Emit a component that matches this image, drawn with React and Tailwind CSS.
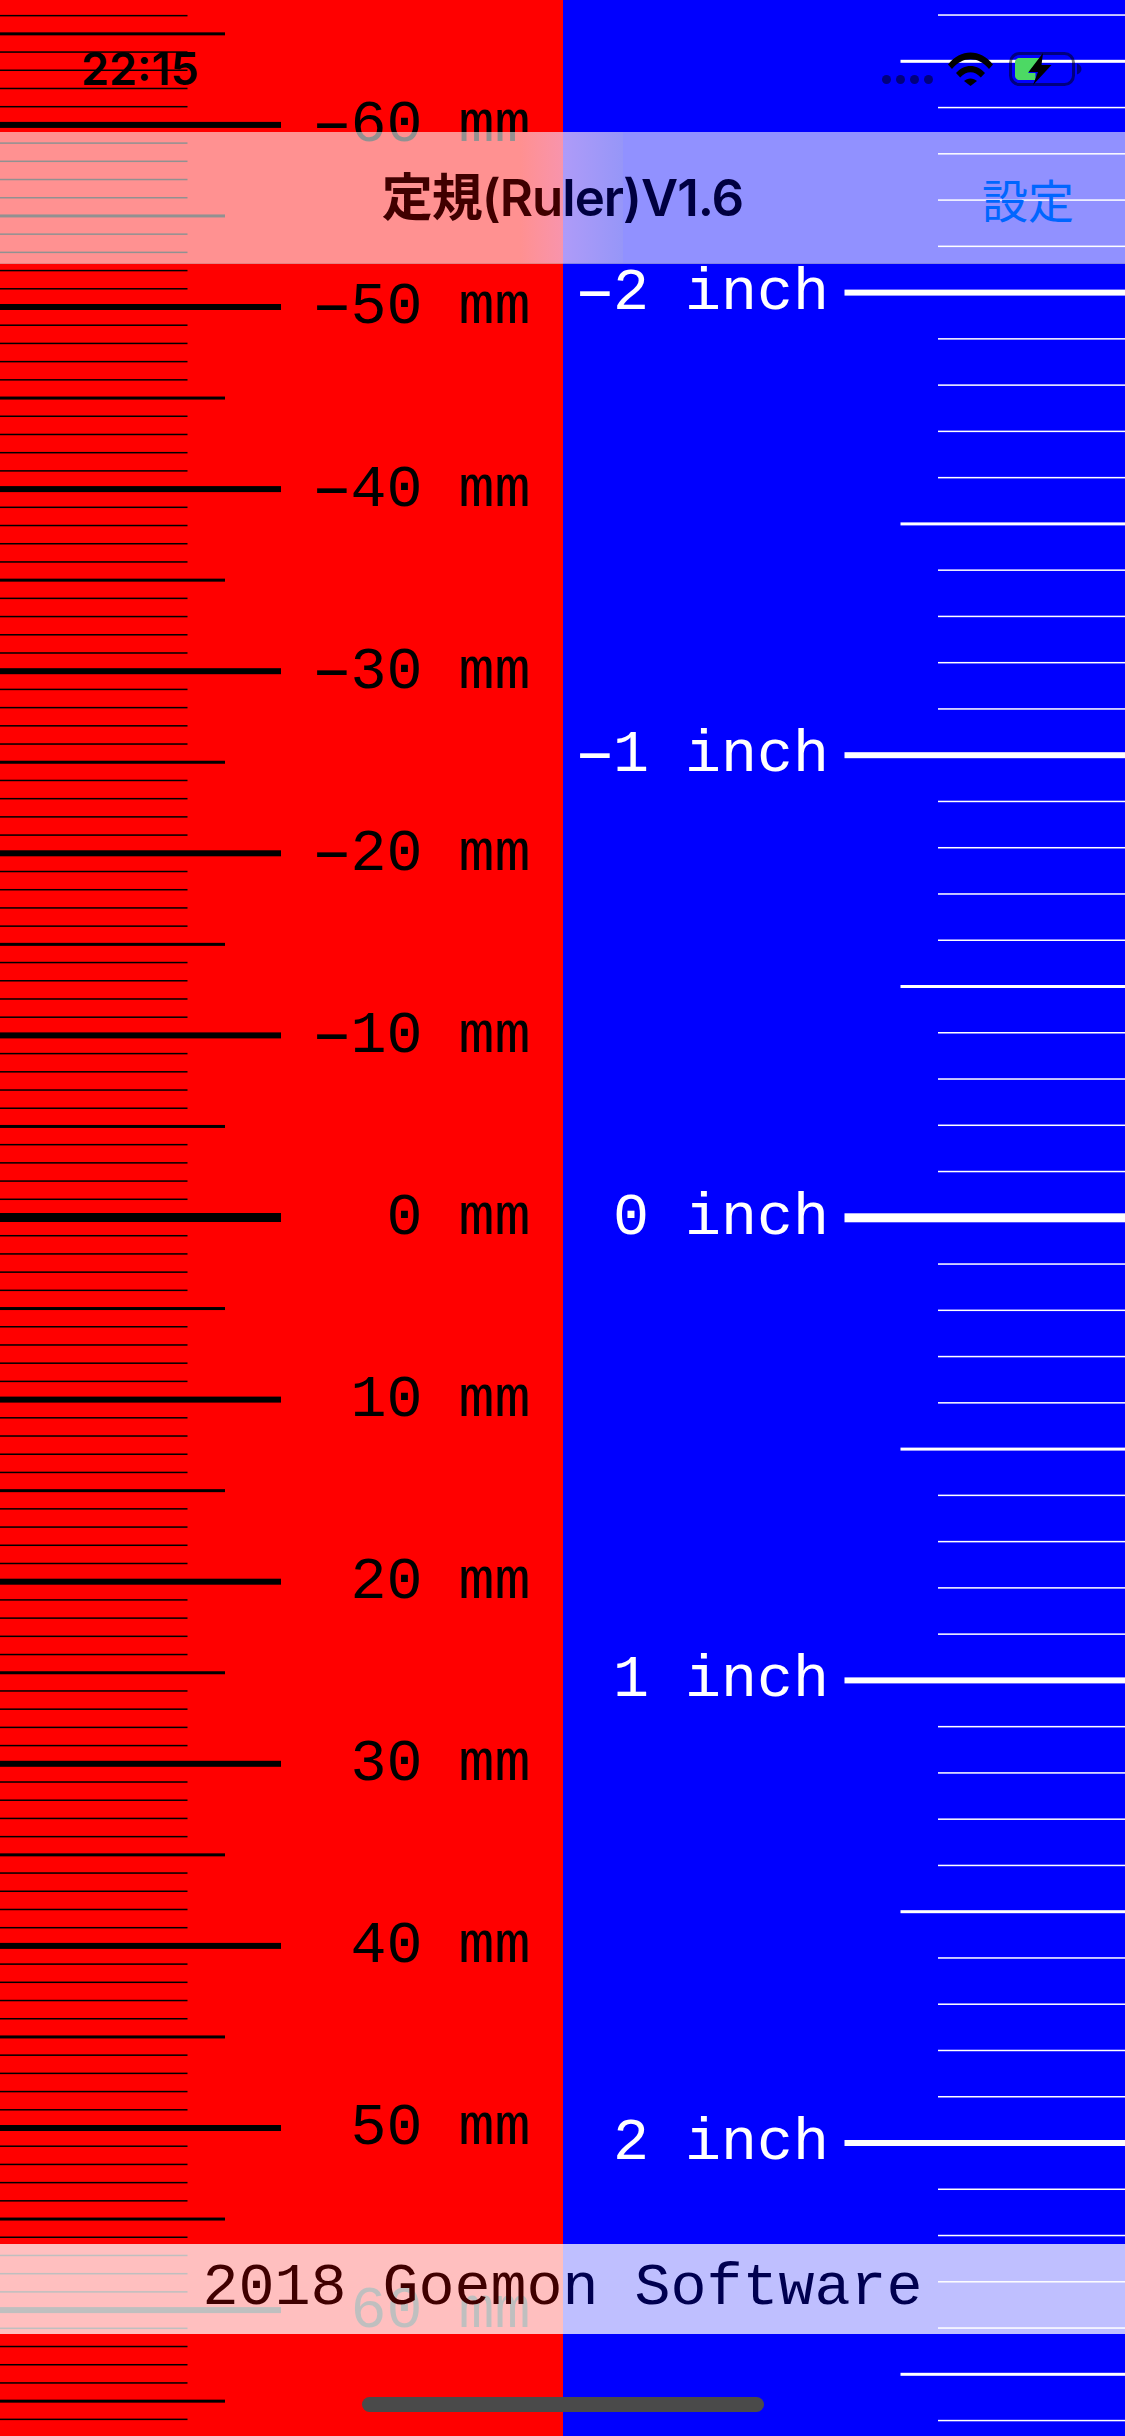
const MM_ZERO = 1217.5;
const MM_STEP = 18.21;
const INCH_ZERO = 1217.8;
const INCH_STEP = 46.26;

const range = (from, to) => Array.from({ length: to - from + 1 }, (_, i) => from + i);

const toTick = (k, y) => {
  if (k === 0) return { k, y, w: 281, h: 9 };
  if (k % 10 === 0) return { k, y, w: 281, h: 6 };
  if (k % 5 === 0) return { k, y, w: 225, h: 3 };
  return { k, y, w: 187.5, h: 1.5 };
};

const mmTicks = range(-66, 67).map((k) => toTick(k, MM_ZERO + k * MM_STEP));
const inchTicks = range(-26, 26).map((k) => toTick(k, INCH_ZERO + k * INCH_STEP));

const mmLabels = range(-6, 6).map((n) => n * 10);
const inchLabels = range(-2, 2);

// the tick marks of one ruler, drawn so they keep their fractional positions
const Scale = ({ ticks, side, color }) => (
  <svg width="562.5" height="2436" className="absolute inset-0 block">
    {ticks.map((t) => (
      <rect
        key={t.k}
        x={side === 'left' ? 0 : 562.5 - t.w}
        y={t.y - t.h / 2}
        width={t.w}
        height={t.h}
        fill={color}
      />
    ))}
  </svg>
);

const Label = ({ n, unit }) => (
  <span className="whitespace-pre leading-none">
    {n < 0 && <span className="inline-block scale-x-[1.8]">-</span>}
    {Math.abs(n)} {unit}
  </span>
);

const WifiIcon = () => (
  <svg width="45" height="34" viewBox="0 0 45 34">
    <path d="M0 12.5C12.5 -3.5 32.5 -3.5 45 12.5L41 17C30.5 4 14.5 4 4 17Z" fill="#000" />
    <path d="M8 21C16 11.5 29 11.5 37 21L32.8 25.4C26.5 18.5 18.5 18.5 12.2 25.4Z" fill="#000" />
    <path d="M16 29C19.5 25.5 25.5 25.5 29 29L22.5 34Z" fill="#000" />
  </svg>
);

const BatteryIcon = () => (
  <svg width="76" height="36" viewBox="0 0 76 36">
    <rect x="2.5" y="2.5" width="63" height="31" rx="9" fill="none" stroke="#000" strokeOpacity="0.5" strokeWidth="3" />
    <path d="M69 12.5C72 13.5 73.5 15.5 73.5 18C73.5 20.5 72 22.5 69 23.5Z" fill="#000" fillOpacity="0.5" />
    <path d="M11 7H33L20 22H27.5V29H11C9 29 7 27 7 25V11C7 9 9 7 11 7Z" fill="#4cd964" />
    <path d="M35 2L20.5 21H30L25 34L43.5 14H33.5Z" fill="#000" />
  </svg>
);

const StatusBar = () => (
  <div className="h-[132px] shrink-0 flex pl-[81px] pr-[41px]">
    <span className="pt-[41px] text-[45px] leading-[56px] font-semibold text-black font-['Inter',sans-serif]">
      22:15
    </span>
    <div className="ml-auto pt-[51px] flex items-start">
      <div className="mt-[24px] mr-[15px] flex gap-[4.7px]">
        {[0, 1, 2, 3].map((i) => (
          <span key={i} className="w-[9.3px] h-[9.3px] rounded-full bg-black/50" />
        ))}
      </div>
      <div className="mt-[1px] mr-[15px]">
        <WifiIcon />
      </div>
      <BatteryIcon />
    </div>
  </div>
);

const NavBar = () => (
  <div className="relative h-[132px] shrink-0 bg-white/57 border-b border-black/10 grid grid-cols-[1fr_auto_1fr] items-center">
    {/* the bar's blur only shows where the two colours meet */}
    <div className="absolute inset-y-0 left-[520px] w-[42.5px] bg-gradient-to-r from-[#ff9090] to-[#f894ac]" />
    <div className="absolute inset-y-0 left-[562.5px] w-[60px] bg-gradient-to-r from-[#ae9bf8] to-[#9696f8]" />
    <span />
    <h1 className="relative text-[51px] leading-[64px] tracking-[-1px] font-semibold bg-gradient-to-r from-[#400000] from-50% to-[#000040] to-50% bg-clip-text text-transparent font-['Inter','Noto_Sans_CJK_JP',sans-serif]">
      定規(Ruler)V1.6
    </h1>
    <span className="relative justify-self-end pr-[51px] text-[46px] leading-[64px] text-[#0066ff] font-['Noto_Sans_CJK_JP',sans-serif]">
      設定
    </span>
  </div>
);

const Footer = () => (
  <div className="h-[90px] shrink-0 bg-white/75 flex items-center justify-center pb-[2px]">
    <p className="text-[60px] leading-[86px] whitespace-pre bg-gradient-to-r from-[#400000] from-50% to-[#000050] to-50% bg-clip-text text-transparent font-['Liberation_Mono',monospace]">
      2018 Goemon Software
    </p>
  </div>
);

export default function App() {
  return (
    <div className="relative w-[1125px] h-[2436px] overflow-hidden flex font-['Liberation_Mono',monospace] text-[60px]">
      <div className="relative w-[562.5px] h-full bg-[#ff0000] text-black">
        <Scale ticks={mmTicks} side="left" color="#000" />
        <div className="relative flex flex-col items-end pt-[34.35px] pr-[32px]">
          {mmLabels.map((n) => (
            <div key={n} className="h-[182.1px] shrink-0 flex items-center">
              <Label n={n} unit="mm" />
            </div>
          ))}
        </div>
      </div>
      <div className="relative w-[562.5px] h-full bg-[#0000ff] text-white">
        <Scale ticks={inchTicks} side="right" color="#fff" />
        <div className="relative flex flex-col items-end pt-[61.3px] pr-[296px]">
          {inchLabels.map((n) => (
            <div key={n} className="h-[462.6px] shrink-0 flex items-center">
              <Label n={n} unit="inch" />
            </div>
          ))}
        </div>
      </div>

      {/* bars lying over the two rulers */}
      <div className="absolute inset-0 flex flex-col">
        <StatusBar />
        <NavBar />
        <div className="flex-1" />
        <Footer />
        <div className="h-[102px] shrink-0 flex justify-center pt-[63px]">
          <div className="w-[402px] h-[15px] rounded-full bg-[#4a4a4a]" />
        </div>
      </div>
    </div>
  );
}
